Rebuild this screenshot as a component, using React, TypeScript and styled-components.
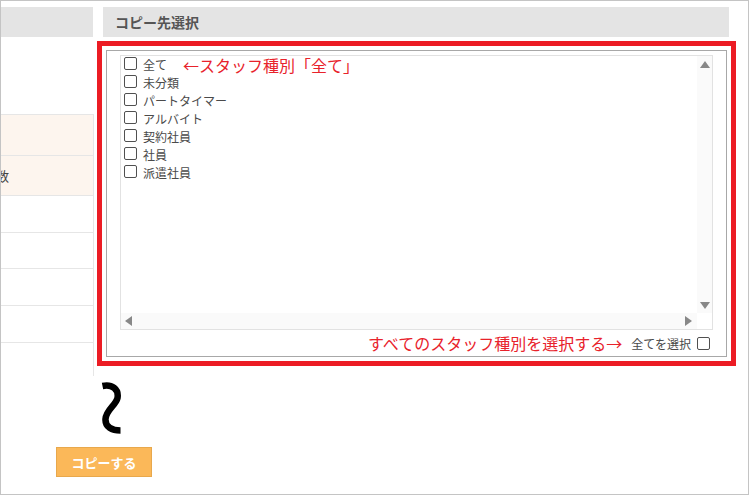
import React from "react";
import styled, { createGlobalStyle } from "styled-components";

const Global = createGlobalStyle`
  html, body { margin: 0; padding: 0; background: #fff; }
  body { font-family: "Noto Sans CJK JP", "Noto Sans", sans-serif; }
  * { box-sizing: border-box; }
`;

const Page = styled.div`
  width: 749px;
  height: 495px;
  border: 1px solid #c4c4c4;
  padding-top: 6px;
  display: flex;
  flex-direction: column;
  overflow: hidden;
`;

const TopRow = styled.div`
  display: flex;
  align-items: flex-start;
`;

const LeftCol = styled.div`
  width: 93px;
  overflow: hidden;
  display: flex;
  flex-direction: column;
`;

const LeftHeader = styled.div`
  width: 92px;
  height: 30px;
  background: #e4e4e4;
`;

const LeftTable = styled.div`
  margin-top: 77px;
  display: flex;
  flex-direction: column;
`;

const LeftRow = styled.div<{ $h: number; $peach?: boolean }>`
  height: ${(p) => p.$h}px;
  background: ${(p) => (p.$peach ? "#fdf5ee" : "#fff")};
  border-top: 1px solid #e6e6e6;
  border-right: 1px solid #e6e6e6;
  display: flex;
  align-items: center;
  font-size: 13px;
  color: #444;
  white-space: nowrap;
`;

const ClippedLabel = styled.span`
  margin-left: -5px;
`;

const RightCol = styled.div`
  width: 626px;
  margin-left: 9px;
  display: flex;
  flex-direction: column;
`;

const RightHeader = styled.div`
  height: 30px;
  background: #e4e4e4;
  padding-left: 12px;
  display: flex;
  align-items: center;
  font-size: 14px;
  font-weight: 700;
  color: #555;
`;

const CopyBox = styled.div`
  margin: 13px 0 0 3px;
  width: 621px;
  height: 307px;
  border: 1px solid #a8a8a8;
  outline: 5px solid #ec1c24;
  outline-offset: 4px;
  padding: 4px 13px 0 13px;
  display: flex;
  flex-direction: column;
`;

const ListBox = styled.div`
  height: 275px;
  border: 1px solid #e2e2e2;
  display: grid;
  grid-template-columns: 1fr 15px;
  grid-template-rows: 1fr 16px;
`;

const Items = styled.div`
  display: flex;
  flex-direction: column;
  padding-left: 3px;
`;

const Item = styled.label`
  height: 18px;
  display: flex;
  align-items: flex-start;
  font-size: 12px;
  line-height: 18px;
  color: #4a4a4a;
  white-space: nowrap;
`;

const Check = styled.input.attrs({ type: "checkbox" })<{ $gap?: number }>`
  appearance: none;
  -webkit-appearance: none;
  width: 13px;
  height: 13px;
  margin: 1px ${(p) => p.$gap ?? 6}px 0 0;
  border: 1px solid #505050;
  border-radius: 2px;
  background: #fff;
  flex: none;
`;

const Note = styled.span<{ $ml?: number }>`
  margin-left: ${(p) => p.$ml ?? 0}px;
  font-size: 16px;
  line-height: 18px;
  color: #e8222b;
  white-space: nowrap;
`;

const VBar = styled.div`
  background: #fafafa;
  display: flex;
  flex-direction: column;
  justify-content: space-between;
  align-items: center;
  padding: 5px 0 4px 0;
`;

const HBar = styled.div`
  background: #fafafa;
  display: flex;
  justify-content: space-between;
  align-items: center;
  padding: 0 5px 0 4px;
`;

const Corner = styled.div`
  background: #fff;
`;

const Arrow = styled.span<{ $dir: "up" | "down" | "left" | "right" }>`
  width: 0;
  height: 0;
  border-style: solid;
  border-color: transparent;
  ${(p) =>
    p.$dir === "up"
      ? "border-width: 0 5px 7px 5px; border-bottom-color: #888;"
      : p.$dir === "down"
      ? "border-width: 7px 5px 0 5px; border-top-color: #888;"
      : p.$dir === "left"
      ? "border-width: 5px 7px 5px 0; border-right-color: #888;"
      : "border-width: 5px 0 5px 7px; border-left-color: #888;"}
`;

const Footer = styled.div`
  height: 26px;
  display: flex;
  justify-content: flex-end;
  align-items: center;
  padding-right: 3px;
`;

const SelectAll = styled.label`
  display: flex;
  align-items: center;
  margin-left: 9px;
  font-size: 12px;
  color: #4a4a4a;
  white-space: nowrap;
`;

const Bottom = styled.div`
  display: flex;
  flex-direction: column;
  align-items: flex-start;
`;

const Wave = styled.svg`
  margin: 5px 0 0 99px;
  display: block;
`;

const CopyButton = styled.button`
  margin: 12px 0 0 55px;
  width: 96px;
  height: 30px;
  background: #fbb859;
  border: 1px solid #e8a84c;
  color: #fff;
  font-family: "Noto Sans CJK JP", "Noto Sans", sans-serif;
  font-size: 13px;
  font-weight: 700;
  padding: 0;
  cursor: pointer;
`;

const kinds = ["全て", "未分類", "パートタイマー", "アルバイト", "契約社員", "社員", "派遣社員"];

const leftRows = [
  { h: 41, peach: true, text: "" },
  { h: 40, peach: true, text: "数" },
  { h: 37 },
  { h: 36 },
  { h: 37 },
  { h: 37 },
  { h: 34 },
];

export default function App() {
  return (
    <>
      <Global />
      <Page>
        <TopRow>
          <LeftCol>
            <LeftHeader />
            <LeftTable>
              {leftRows.map((r, i) => (
                <LeftRow key={i} $h={r.h} $peach={r.peach}>
                  {r.text ? <ClippedLabel>{r.text}</ClippedLabel> : null}
                </LeftRow>
              ))}
            </LeftTable>
          </LeftCol>
          <RightCol>
            <RightHeader>コピー先選択</RightHeader>
            <CopyBox>
              <ListBox>
                <Items>
                  {kinds.map((k, i) => (
                    <Item key={k}>
                      <Check />
                      {k}
                      {i === 0 ? <Note $ml={16}>←スタッフ種別「全て」</Note> : null}
                    </Item>
                  ))}
                </Items>
                <VBar>
                  <Arrow $dir="up" />
                  <Arrow $dir="down" />
                </VBar>
                <HBar>
                  <Arrow $dir="left" />
                  <Arrow $dir="right" />
                </HBar>
                <Corner />
              </ListBox>
              <Footer>
                <Note>すべてのスタッフ種別を選択する→</Note>
                <SelectAll>
                  全てを選択
                  <Check style={{ marginLeft: 6, marginTop: 0 }} $gap={0} />
                </SelectAll>
              </Footer>
            </CopyBox>
          </RightCol>
        </TopRow>
        <Bottom>
          <Wave width="24" height="54" viewBox="0 0 24 54">
            <path
              d="M2.5,5 C12,3 19,8 17.5,17 C16,24 6,29 5.5,38 C5,46 12,49.5 20.5,49.5"
              fill="none"
              stroke="#000"
              strokeWidth="6.5"
            />
          </Wave>
          <CopyButton>コピーする</CopyButton>
        </Bottom>
      </Page>
    </>
  );
}
